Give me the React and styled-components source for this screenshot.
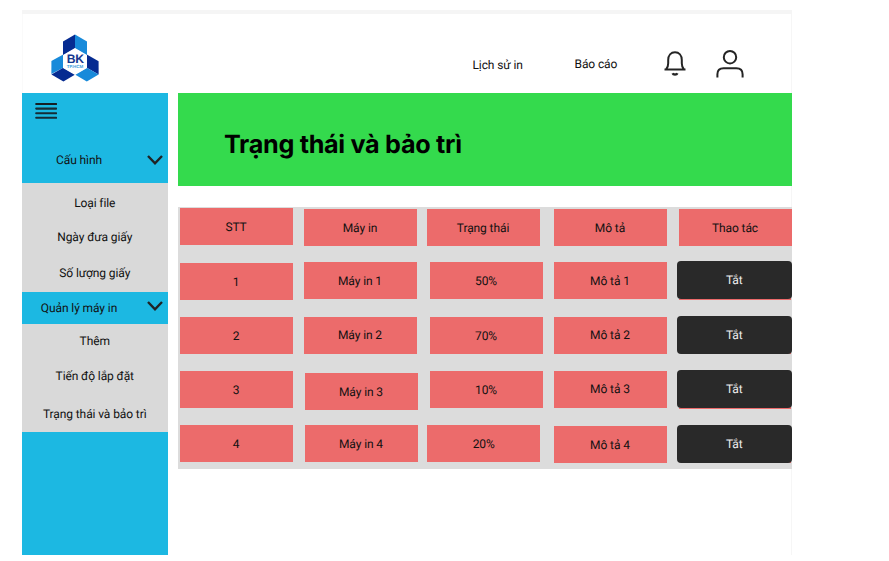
import React from "react";
import styled, { createGlobalStyle } from "styled-components";

const GlobalStyle = createGlobalStyle`
  * { box-sizing: border-box; }
  body { margin: 0; background: #fff; }
`;

const Page = styled.div`
  width: 889px;
  height: 561px;
  padding: 10px 0 0 22px;
  overflow: hidden;
  font: 400 12px/16px Roboto, "Noto Sans", sans-serif;
  letter-spacing: -0.1px;
  text-rendering: geometricPrecision;
  color: #111;
  background: #fff;
`;

const Frame = styled.div`
  width: 770px;
  height: 545px;
  display: flex;
  flex-direction: column;
  border-top: 4px solid #f5f5f5;
  box-shadow: inset -1px 0 #f6f6f6, inset 1px 0 #fafafa;
`;

const Header = styled.header`
  display: flex;
  height: 79px;
  flex: none;
`;

const Logo = styled.svg`
  width: 48px;
  height: 48px;
  margin: 19.5px 0 0 29px;
`;

const Nav = styled.nav`
  display: flex;
  margin-left: auto;
  padding-right: 48px;
`;

const NavLink = styled.a`
  width: ${(p) => p.$width}px;
  margin-top: ${(p) => p.$top}px;
  font-size: 12px;
  white-space: nowrap;
`;

const HeaderIcon = styled.svg`
  flex: none;
  width: ${(p) => p.$width}px;
  height: ${(p) => p.$height}px;
  margin: ${(p) => p.$top}px ${(p) => p.$after || 0}px 0 0;
  fill: none;
  stroke: #242424;
  stroke-width: 2;
`;

const Body = styled.div`
  display: flex;
  flex: 1;
  gap: 10.5px;
`;

const Sidebar = styled.aside`
  width: 145.5px;
  background: #1cb8e2;
`;

const MenuIcon = styled.svg`
  display: block;
  width: 22px;
  height: 18px;
  margin-left: 13px;
`;

const SidebarTop = styled.div`
  height: 43px;
  padding-top: 9px;
`;

const GroupTitle = styled.div`
  display: flex;
  align-items: center;
  height: ${(p) => p.$height}px;
  padding: 0 5px 1px 0;
`;

const GroupLabel = styled.span`
  flex: 1;
  padding: ${(p) => p.$drop || 0}px 10.5px 0 0;
  text-align: center;
`;

const Chevron = styled.svg`
  width: 16px;
  height: 10px;
  margin-top: ${(p) => p.$drop || 0}px;
  fill: none;
  stroke: #202325;
  stroke-width: 2.4;
`;

const SubMenu = styled.div`
  display: flex;
  flex-direction: column;
  height: ${(p) => p.$height}px;
  background: #d9d9d9;
  text-align: center;
`;

const SubItem = styled.a`
  height: 16px;
  margin-top: ${(p) => p.$gap}px;
  white-space: nowrap;
`;

const Main = styled.main`
  width: 614px;
`;

const Banner = styled.section`
  height: 93px;
  padding: 35px 0 0 46px;
  background: #34da4d;
`;

const Title = styled.h1`
  margin: 0;
  font: 700 25.2px/34px Inter, sans-serif;
  letter-spacing: -0.3px;
  color: #000;
`;

const Table = styled.section`
  display: flex;
  height: 262px;
  margin-top: 21px;
  padding-left: 1.5px;
  background: #dcdcdc;
`;

const Column = styled.div`
  flex: none;
  width: ${(p) => p.$width}px;
`;

const Cell = styled.div`
  display: flex;
  align-items: center;
  justify-content: center;
  width: ${(p) => p.$width || 113}px;
  height: 37px;
  margin: ${(p) => p.$gap}px 0 0 ${(p) => p.$shift || 0}px;
  padding-top: 0.5px;
  background: #ec6b6b;
`;

const ActionSlot = styled.div`
  width: 112.5px;
  height: 38.5px;
  margin: ${(p) => p.$gap}px 0 0 1.5px;
  background: linear-gradient(#dcdcdc 50%, #ec6b6b 50%);
`;

const OffButton = styled.button`
  display: block;
  width: 114.5px;
  height: 38px;
  margin-left: -1.5px;
  padding: 0;
  border: 0;
  border-radius: 4px;
  background: #292929;
  box-shadow: -1px 0 #dcdcdc;
  color: #eee;
  font: inherit;
  text-rendering: inherit;
  letter-spacing: inherit;
`;

const columns = [
  { width: 124, cells: [["STT", 1.3], ["1", 17.5], ["2", 17], ["3", 17], ["4", 17]] },
  { width: 123, cells: [["Máy in", 2], ["Máy in 1", 16.2], ["Máy in 2", 17.5], ["Máy in 3", 19.3, 1], ["Máy in 4", 15.2, 1]] },
  { width: 127, cells: [["Trạng thái", 2], ["50%", 16, 3], ["70%", 18.2, 3], ["10%", 17, 3], ["20%", 16.8, 0.7]] },
  { width: 123.5, cells: [["Mô tả", 2], ["Mô tả 1", 16], ["Mô tả 2", 17.5], ["Mô tả 3", 17], ["Mô tả 4", 18.5]] },
];

function Brand() {
  return (
    <Logo viewBox="0 0 48 48">
      <path d="M12 7.5 24 .5v14l-12 7z" fill="#062b91" />
      <path d="m24 .5 12 7v14l-12-7z" fill="#188ada" />
      <path d="m.4 27 11.8-6.5v13.2L.4 40z" fill="#188ada" />
      <path d="m.4 40.5 11.8-6.8 12 6.8-11.8 7z" fill="#062b91" />
      <path d="m35.8 20.5 11.8 6.8v13.2l-11.8-6.8z" fill="#062b91" />
      <path d="m24 40.5 11.8-6.8 11.8 6.8-11.8 7z" fill="#188ada" />
      <path d="m24 14 12 7v13l-12 7-12-7V21z" fill="#fff" />
      <text x="24.2" y="29.3" textAnchor="middle" fill="#17388f" fontFamily="Liberation Sans, sans-serif" fontWeight="700" fontSize="12.2" letterSpacing="-.4">BK</text>
      <text x="24" y="34.2" textAnchor="middle" fill="#42a0dd" fontFamily="Liberation Sans, sans-serif" fontWeight="700" fontSize="4.5" letterSpacing="0">TP.HCM</text>
    </Logo>
  );
}

function ChevronDown({ drop }) {
  return <Chevron $drop={drop} viewBox="0 0 16 10"><path d="m1 1 7 7.3L15 1" /></Chevron>;
}

export default function App() {
  return (
    <Page>
      <GlobalStyle />
      <Frame>
        <Header>
          <Brand />
          <Nav>
            <NavLink $top={43} $width={102}>Lịch sử in</NavLink>
            <NavLink $top={42} $width={89.5}>Báo cáo</NavLink>
            <HeaderIcon $width={22} $height={26} $top={36.5} $after={30} viewBox="0 0 22 26">
              <path d="M.5 18.4h21M2.2 18.2c1.5-1.7 2-3.4 2-6V9c0-4.7 2.8-7.8 6.8-7.8s6.8 3.1 6.8 7.8v3.2c0 2.6.5 4.3 2 6" />
              <path d="M8.6 22.2c.7 1.8 4.1 1.8 4.8 0" strokeWidth="2.4" />
            </HeaderIcon>
            <HeaderIcon $width={28} $height={28} $top={36} viewBox="0 0 28 28">
              <circle cx="14" cy="7.2" r="6.2" />
              <path d="M1.4 27.5v-3.2c0-4 2.3-6.1 6.2-6.1h12.8c3.9 0 6.2 2.1 6.2 6.1v3.2" />
            </HeaderIcon>
          </Nav>
        </Header>
        <Body>
          <Sidebar>
            <SidebarTop>
              <MenuIcon viewBox="0 0 22 18">
                <g stroke="#152c36" strokeWidth="2.1" strokeLinecap="round">
                  <path d="M1.2 2h20" stroke="#151f24" />
                  <path d="M1.2 6.6h20M1.2 11.2h20M1.2 15.7h20" />
                </g>
              </MenuIcon>
            </SidebarTop>
            <GroupTitle $height={47.3}>
              <GroupLabel $drop={2}>Cấu hình</GroupLabel>
              <ChevronDown drop={2} />
            </GroupTitle>
            <SubMenu $height={108.4}>
              <SubItem $gap={12}>Loại file</SubItem>
              <SubItem $gap={18}>Ngày đưa giấy</SubItem>
              <SubItem $gap={20}>Số lượng giấy</SubItem>
            </SubMenu>
            <GroupTitle $height={32}>
              <GroupLabel $drop={2.5}>Quản lý máy in</GroupLabel>
              <ChevronDown drop={-2} />
            </GroupTitle>
            <SubMenu $height={108}>
              <SubItem $gap={9}>Thêm</SubItem>
              <SubItem $gap={19}>Tiến độ lắp đặt</SubItem>
              <SubItem $gap={22.5}>Trạng thái và bảo trì</SubItem>
            </SubMenu>
          </Sidebar>
          <Main>
            <Banner><Title>Trạng thái và bảo trì</Title></Banner>
            <Table>
              {columns.map((column) => (
                <Column key={column.cells[0][0]} $width={column.width}>
                  {column.cells.map(([text, gap, shift]) => (
                    <Cell key={text} $gap={gap} $shift={shift}>{text}</Cell>
                  ))}
                </Column>
              ))}
              <Column $width={115}>
                <Cell $gap={2} $shift={1.5}>Thao tác</Cell>
                {[15, 16.2, 16, 16].map((gap, i) => (
                  <ActionSlot key={i} $gap={gap}><OffButton>Tắt</OffButton></ActionSlot>
                ))}
              </Column>
            </Table>
          </Main>
        </Body>
      </Frame>
    </Page>
  );
}
